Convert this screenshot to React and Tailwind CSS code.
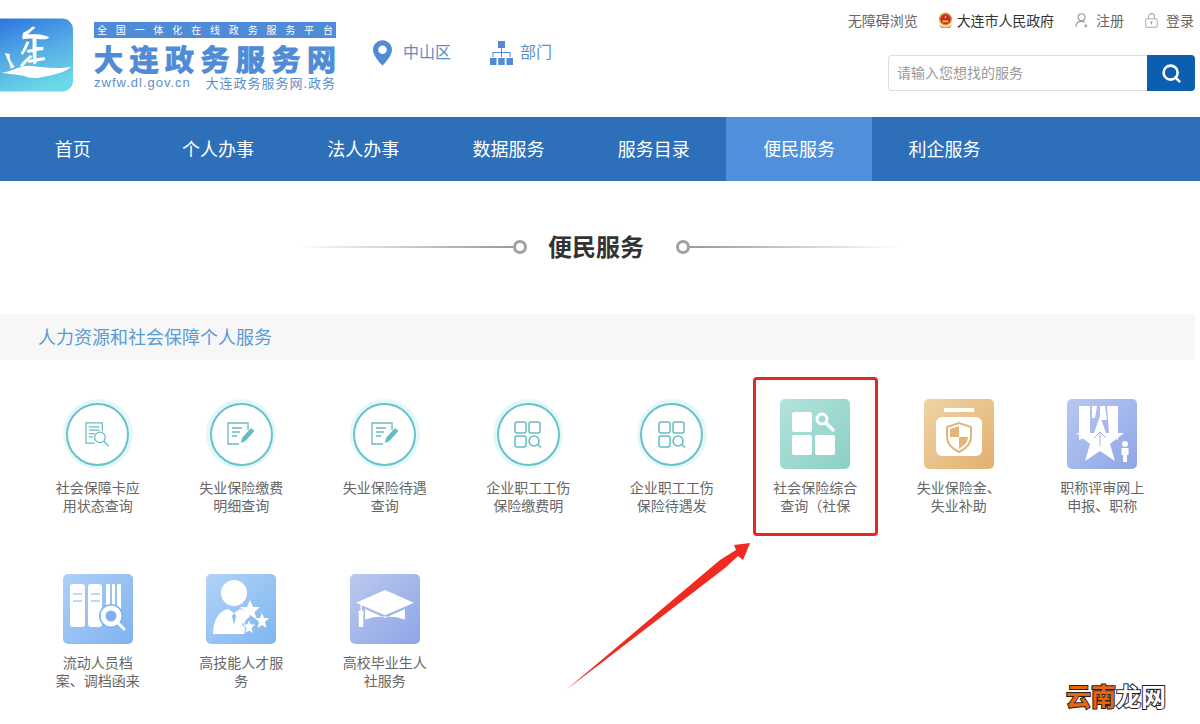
import React from "react";
import { Search } from "lucide-react";

const navItems = ["首页", "个人办事", "法人办事", "数据服务", "服务目录", "便民服务", "利企服务"];

const LogoMark = () => (
  <svg viewBox="0 0 74 74" className="w-[73px] h-[74px] shrink-0">
    <defs>
      <linearGradient id="logoBg" x1="0.2" y1="0" x2="0.6" y2="1">
        <stop offset="0" stopColor="#2f78df" />
        <stop offset="0.55" stopColor="#58b0e6" />
        <stop offset="1" stopColor="#6bd9e8" />
      </linearGradient>
    </defs>
    <rect x="-12" width="86" height="74" rx="11" fill="url(#logoBg)" />
    <g fill="#fff">
      <path d="M2 55 C14 53 22 47 30 48 C42 49 58 52 72 49 C66 55 52 58 44 59 C38 61 33 60 30 60 C20 56 10 57 2 55Z" />
      <path d="M5 35 L10 36 C9 40 11 44 15 49 L11 51 C10 46 7 41 5 35Z" />
      <path d="M33 8 L36 9 C33 12 30 14 28 16 C34 16 42 15 50 19 C47 22 43 21 40 21 C34 20 28 20 23 21 C22 19 23 16 24 14 C27 13 30 11 33 8Z" />
      <path d="M33 20 L37 20 L37 29 L44 29 L44 32 L37 33 L37 45 L34 47 L33 34 L28 35 L27 32 L33 31Z" />
      <path d="M27 23 L30 24 C28 28 26 33 23 37 L21 35 C24 31 25 27 27 23Z" />
      <path d="M20 48 C25 42 29 38 31 37 L33 39 C30 41 26 45 23 49Z" />
      <path d="M28 42 L45 39 L46 42 L29 45Z" />
    </g>
  </svg>
);

const Pin = () => (
  <svg viewBox="0 0 20 27" className="w-[19px] h-[26px]">
    <path fillRule="evenodd" fill="#4f8bd6" d="M10 0C4.5 0 0 4.5 0 10c0 6.500 7 13 10 17 3-4 10-10.500 10-17C20 4.500 15.500 0 10 0Zm0 5.500a4.500 4.500 0 1 1 0 9 4.500 4.500 0 0 1 0-9Z" />
  </svg>
);

const OrgChart = () => (
  <svg viewBox="0 0 23 24" className="w-[23px] h-[24px]" fill="#4f8bd6">
    <rect x="8" y="0" width="7" height="7" />
    <rect x="0" y="17" width="6.500" height="7" />
    <rect x="8.200" y="17" width="6.500" height="7" />
    <rect x="16.500" y="17" width="6.500" height="7" />
    <path d="M11 7h1v4h8.500v5h-1v-4H12v4h-1v-4H3.500v4h-1v-5H11Z" />
  </svg>
);

const Emblem = () => (
  <svg viewBox="0 0 16 17" className="w-[15px] h-[16px]">
    <path d="M1 12 C3 17 13 17 15 12 L13 17 H3Z" fill="#d9a13b" />
    <circle cx="8" cy="7.500" r="7" fill="#d9a13b" />
    <circle cx="8" cy="7.500" r="5.500" fill="#cf2a1e" />
    <path d="M8 3.500 L9 6 H6.800Z M5 9h6v2H5Z" fill="#f2c94c" />
  </svg>
);

const UserLine = () => (
  <svg viewBox="0 0 15 16" className="w-[14px] h-[15px]" fill="none" stroke="#999" strokeWidth="1.200">
    <circle cx="7" cy="4.500" r="3.700" />
    <path d="M1 15 C1 11 3.500 9 7 9 C8.500 9 9.500 9.300 10.500 10" />
    <path d="M11.500 12v3.500M10 13.700h3.200" />
  </svg>
);

const LockLine = () => (
  <svg viewBox="0 0 14 16" className="w-[13px] h-[15px]" fill="none" stroke="#aaa" strokeWidth="1.100">
    <rect x="0.800" y="6" width="12.400" height="9.300" rx="1.500" />
    <path d="M3.800 6V3.800a3.200 3.200 0 0 1 6.400 0V6" />
    <path d="M7 9v3M5.800 9.800h2.400" stroke="#999" />
  </svg>
);

// round teal icons
const RoundIcon = ({ children }) => (
  <div className="w-[70px] h-[70px] rounded-full bg-[#e6f7fa] flex items-center justify-center">
    <div className="w-[63px] h-[63px] rounded-full bg-white border-2 border-[#66c3c9] flex items-center justify-center">
      {children}
    </div>
  </div>
);

const DocSearch = () => (
  <svg viewBox="0 0 26 26" className="w-[25px] h-[25px]" fill="none" stroke="#66bcc4" strokeWidth="1.300">
    <path d="M18 10V1H1v21h9" />
    <path d="M4 5h11M4 8.500h11M4 12h6M4 15.500h4" />
    <circle cx="15.500" cy="16" r="5.500" />
    <path d="M19.500 20l5 5" />
  </svg>
);

const DocPen = () => (
  <svg viewBox="0 0 28 24" className="w-[28px] h-[24px]" fill="none" stroke="#66bcc4" strokeWidth="1.300">
    <path d="M21 8V1H1v21h11" />
    <path d="M5 6h10M5 10h8M5 14h5" />
    <path d="M15 16 L24 6 L27.500 9 L18.500 19 L14 21Z" fill="#66bcc4" stroke="none" />
  </svg>
);

const GridSearch = () => (
  <svg viewBox="0 0 28 27" className="w-[28px] h-[27px]" fill="none" stroke="#66bcc4" strokeWidth="1.500">
    <rect x="1" y="1" width="11" height="11" rx="2" />
    <rect x="15" y="1" width="11" height="11" rx="2" />
    <rect x="1" y="15" width="11" height="11" rx="2" />
    <circle cx="20" cy="20" r="5" />
    <path d="M23.500 23.500l3.500 3" />
  </svg>
);

const SquareIcon = ({ className, children }) => (
  <div className={`w-[70px] h-[70px] rounded-[5px] flex items-center justify-center ${className}`}>
    {children}
  </div>
);

const TealGrid = () => (
  <svg viewBox="0 0 46 46" className="w-[46px] h-[46px]" fill="#fff">
    <rect x="0" y="1" width="20" height="20" rx="2" />
    <rect x="0" y="24" width="20" height="20" rx="2" />
    <rect x="23" y="24" width="20" height="20" rx="2" />
    <circle cx="30" cy="8" r="5" fill="none" stroke="#fff" strokeWidth="3" />
    <path d="M34 12l7 7" stroke="#fff" strokeWidth="3.500" strokeLinecap="round" />
  </svg>
);

const ShieldCase = () => (
  <svg viewBox="0 0 46 52" className="w-[46px] h-[52px]">
    <rect x="8" y="0" width="30" height="4" fill="#fff" />
    <rect x="0" y="9" width="46" height="39" rx="6" fill="#fff" />
    <path d="M23 15 L35 19 V29 C35 37 29 41 23 44 C17 41 11 37 11 29 V19Z" fill="none" stroke="#e3b578" strokeWidth="2" />
    <path d="M23 18 V29 H14 V21Z M23 29 H32 C32 35 27 38 23 41Z" fill="#e3b578" />
  </svg>
);

const MedalStar = () => (
  <svg viewBox="0 0 56 56" className="w-[56px] h-[56px]">
    <path d="M5 0h11v30l-11 4ZM18 0h5l-2 12h-3ZM26 0h5l2 14h-7ZM33 0h11v34l-9-5Z" fill="#fff" />
    <path d="M26 10 L32 27 L50 27 L36 38 L41 55 L26 45 L11 55 L16 38 L2 27 L20 27Z" fill="#fff" />
    <path d="M26 26l-6 6M26 26l6 6M26 27v13" stroke="#a6b8ea" strokeWidth="1" fill="none" />
    <circle cx="51" cy="38" r="3" fill="#fff" />
    <path d="M47.500 42h7v7h-1.500v7h-4v-7h-1.500Z" fill="#fff" />
  </svg>
);

const BinderSearch = () => (
  <svg viewBox="0 0 56 50" className="w-[56px] h-[50px]" fill="#fff">
    <rect x="0" y="0" width="15" height="43" rx="3" />
    <rect x="18" y="0" width="14" height="43" rx="3" />
    <rect x="36" y="0" width="4" height="30" rx="1" />
    <rect x="42" y="0" width="3" height="30" rx="1" />
    <rect x="47" y="0" width="4" height="32" rx="1" />
    <path d="M3 10h9M3 17h9M21 10h9M21 17h9" stroke="#a9cdf5" strokeWidth="1.500" />
    <circle cx="41" cy="32" r="12" fill="#7fb3ef" />
    <circle cx="41" cy="32" r="8" fill="none" stroke="#fff" strokeWidth="5" />
    <path d="M48 39l6 6" stroke="#fff" strokeWidth="3" strokeLinecap="round" />
  </svg>
);

const PersonStars = () => (
  <svg viewBox="0 0 56 58" className="w-[56px] h-[58px]" fill="#fff">
    <circle cx="21" cy="13" r="13" />
    <path d="M0 54 C0 40 6 31 15 29 L21 33 L27 29 C31 30 34 33 37 36 L32 41 L33 54Z" />
    <path d="M21 33l-2 3 2 9 2-9Z" fill="#8dbff2" />
    <path d="M37 20 l3 7 7 0 -5.500 5 2 7 -6.500 -4 -6.500 4 2 -7 -5.500 -5 7 0Z" />
    <path d="M49 33 l2 5 5 0 -4 4 1.500 6 -4.500 -3 -4.500 3 1.500 -6 -4 -4 5 0Z" />
    <path d="M36 39 l2 5 5 0 -4 4 1.500 6 -4.500 -3 -4.500 3 1.500 -6 -4 -4 5 0Z" stroke="#8dbff2" strokeWidth="1" />
  </svg>
);

const GradCap = () => (
  <svg viewBox="0 0 64 42" className="w-[58px] h-[38px]" fill="#fff">
    <path d="M32 0 L64 14 L32 28 L0 14Z" />
    <path d="M10 21 L32 31 L54 21 V33 C44 28 20 28 10 33Z" />
    <path d="M5 16h1.500v13H5Z" />
    <circle cx="5.500" cy="25" r="3" />
    <rect x="3" y="27" width="5" height="14" rx="1" />
  </svg>
);

const services = [
  { lines: ["社会保障卡应", "用状态查询"], icon: <RoundIcon><DocSearch /></RoundIcon> },
  { lines: ["失业保险缴费", "明细查询"], icon: <RoundIcon><DocPen /></RoundIcon> },
  { lines: ["失业保险待遇", "查询"], icon: <RoundIcon><DocPen /></RoundIcon> },
  { lines: ["企业职工工伤", "保险缴费明"], icon: <RoundIcon><GridSearch /></RoundIcon> },
  { lines: ["企业职工工伤", "保险待遇发"], icon: <RoundIcon><GridSearch /></RoundIcon> },
  { lines: ["社会保险综合", "查询（社保"], icon: <SquareIcon className="bg-gradient-to-br from-[#b2e3dc] to-[#8ad0c5]"><TealGrid /></SquareIcon> },
  { lines: ["失业保险金、", "失业补助"], icon: <SquareIcon className="bg-gradient-to-br from-[#efd3a6] to-[#e3b06e]"><ShieldCase /></SquareIcon> },
  { lines: ["职称评审网上", "申报、职称"], icon: <SquareIcon className="bg-gradient-to-br from-[#b9c8ef] to-[#8ea6e8]"><MedalStar /></SquareIcon> },
  { lines: ["流动人员档", "案、调档函来"], icon: <SquareIcon className="bg-gradient-to-br from-[#aed0f6] to-[#7fb3ef]"><BinderSearch /></SquareIcon> },
  { lines: ["高技能人才服", "务"], icon: <SquareIcon className="bg-gradient-to-br from-[#b2d3f7] to-[#7fb5ef]"><PersonStars /></SquareIcon> },
  { lines: ["高校毕业生人", "社服务"], icon: <SquareIcon className="bg-gradient-to-br from-[#bcc8ee] to-[#8ea6e6]"><GradCap /></SquareIcon> },
];

export default function App() {
  return (
    <div className="relative w-[1200px] h-[724px] overflow-hidden bg-white font-['Noto_Sans_CJK_SC','Liberation_Sans',sans-serif]">
      {/* Header */}
      <header className="h-[117px] flex">
        <div className="pt-[18px]">
          <LogoMark />
        </div>
        <div className="ml-[21px] pt-[22px] w-[242px] shrink-0">
          <div className="h-[16px] bg-[#4f8bd6] text-white text-[10px] leading-[16px] flex justify-between px-[3px]">
            {"全国一体化在线政务服务平台".split("").map((c, i) => <span key={i}>{c}</span>)}
          </div>
          <div className="h-[30px] mt-[5px] text-[#4f8bd6] text-[29px] leading-[30px] font-bold flex justify-between [-webkit-text-stroke:1px_#4f8bd6]">
            {"大连政务服务网".split("").map((c, i) => <span key={i}>{c}</span>)}
          </div>
          <div className="h-[16px] mt-[2px] text-[#5b8fc9] text-[13px] leading-[16px] flex justify-between whitespace-nowrap">
            <span className="tracking-[1px] font-['Liberation_Sans',sans-serif]">zwfw.dl.gov.cn</span>
            <span className="tracking-[1px]">大连政务服务网.政务</span>
          </div>
        </div>
        <div className="ml-[37px] pt-[40px] flex items-start">
          <Pin />
          <span className="ml-[11px] text-[16px] leading-[22px] text-[#5b8fc9]">中山区</span>
          <span className="ml-[39px] mt-[1px]"><OrgChart /></span>
          <span className="ml-[7px] text-[16px] leading-[22px] text-[#5b8fc9]">部门</span>
        </div>
        <div className="ml-auto pr-[5px] pt-[10px] flex flex-col items-end">
          <div className="h-[20px] mr-[1px] flex items-center text-[14px] text-[#666] whitespace-nowrap">
            <span>无障碍浏览</span>
            <span className="ml-[20px]"><Emblem /></span>
            <span className="ml-[4px] text-[#333] tracking-[-0.1px]">大连市人民政府</span>
            <span className="ml-[21px]"><UserLine /></span>
            <span className="ml-[7px]">注册</span>
            <span className="ml-[21px]"><LockLine /></span>
            <span className="ml-[8px]">登录</span>
          </div>
          <div className="mt-[25px] flex h-[36px] w-[307px]">
            <div className="flex-1 border border-[#ddd] border-r-0 rounded-l-[4px] pl-[8px] text-[14px] leading-[32px] text-[#999]">
              请输入您想找的服务
            </div>
            <div className="w-[48px] bg-[#0c5fb0] rounded-r-[4px] flex items-center justify-center">
              <Search size={21} strokeWidth={3} color="#fff" />
            </div>
          </div>
        </div>
      </header>

      {/* Nav */}
      <nav className="h-[64px] bg-[#2e6fb9] flex">
        {navItems.map((item) => (
          <div
            key={item}
            className={`w-[145.3px] text-center text-[18px] leading-[62px] text-white ${item === "便民服务" ? "bg-[#5090db]" : ""}`}
          >
            {item}
          </div>
        ))}
      </nav>

      {/* Title */}
      <div className="h-[133px] pt-[46px] pl-[295px] flex items-start">
        <div className="h-[40px] flex items-center">
          <div className="w-[218px] h-[2px] bg-gradient-to-r from-transparent to-[#999]" />
          <div className="w-[14px] h-[14px] rounded-full border-[3px] border-[#a0a0a0]" />
          <div className="ml-[21px] text-[24px] leading-[38px] font-bold text-[#333] whitespace-nowrap -translate-y-px">便民服务</div>
          <div className="ml-[32px] w-[14px] h-[14px] rounded-full border-[3px] border-[#a0a0a0]" />
          <div className="w-[210px] h-[2px] bg-gradient-to-l from-transparent to-[#999]" />
        </div>
      </div>

      {/* Section bar */}
      <div className="w-[1195px] h-[46px] bg-[#f7f7f7] pl-[38px] text-[18px] leading-[44px] text-[#5b9bd5]">
        人力资源和社会保障个人服务
      </div>

      {/* Service grid */}
      <div className="ml-[26px] w-[1148px] pt-[39px] grid grid-cols-8">
        {services.map((s) => (
          <div key={s.lines[0] + s.lines[1]} className="h-[175px] flex flex-col items-center">
            {s.icon}
            <div className="mt-[9px] text-[14px] leading-[18px] text-[#666] text-center whitespace-nowrap">
              {s.lines.map((l) => <div key={l}>{l}</div>)}
            </div>
          </div>
        ))}
      </div>

      {/* Annotation box */}
      <div className="absolute left-[753px] top-[377px] w-[125px] h-[159px] border-[3px] border-[#e5281f] rounded-[4px]" />

      {/* Annotation arrow */}
      <svg className="absolute left-[560px] top-[535px]" width="200" height="160" viewBox="0 0 200 160">
        <path d="M6 155 L160 25 L176 15 L174 10 L190 8 L183 25 L178 21 L165 33Z" fill="#f02a20" />
      </svg>

      {/* Watermark */}
      <div className="absolute left-[1066px] top-[678px] text-[25px] leading-[34px] font-bold whitespace-nowrap [paint-order:stroke_fill] [-webkit-text-stroke:2px_#222]">
        <span className="text-[#e8640f]">云南</span>
        <span className="text-white">龙网</span>
      </div>
    </div>
  );
}
